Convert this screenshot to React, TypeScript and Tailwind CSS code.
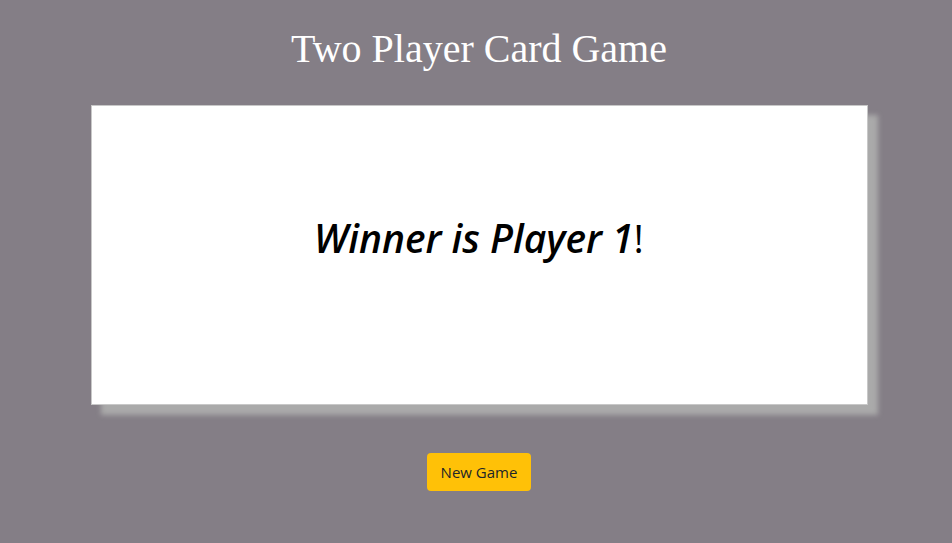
export default function App() {
  return (
    <div className="min-h-[543px] bg-[#847e86] pl-[6px] pt-[22px] font-['Open_Sans',sans-serif]">
      <h1 className="text-center font-['Liberation_Serif',serif] text-[40px] leading-[54px] text-white">
        Two Player Card Game
      </h1>
      <div className="mx-auto mt-[29px] flex h-[300px] w-[777px] items-center justify-center border border-[#c8c8c8] bg-white pb-[34px] shadow-[10px_10px_5px_#aaaaaa]">
        <p className="text-[39px] text-black">
          <em className="font-semibold">Winner is Player 1</em>!
        </p>
      </div>
      <div className="mt-[48px] flex justify-center">
        <button className="h-[38px] w-[104px] rounded-[4px] bg-[#ffc107] text-[15px] text-[#212529]">
          New Game
        </button>
      </div>
    </div>
  );
}
